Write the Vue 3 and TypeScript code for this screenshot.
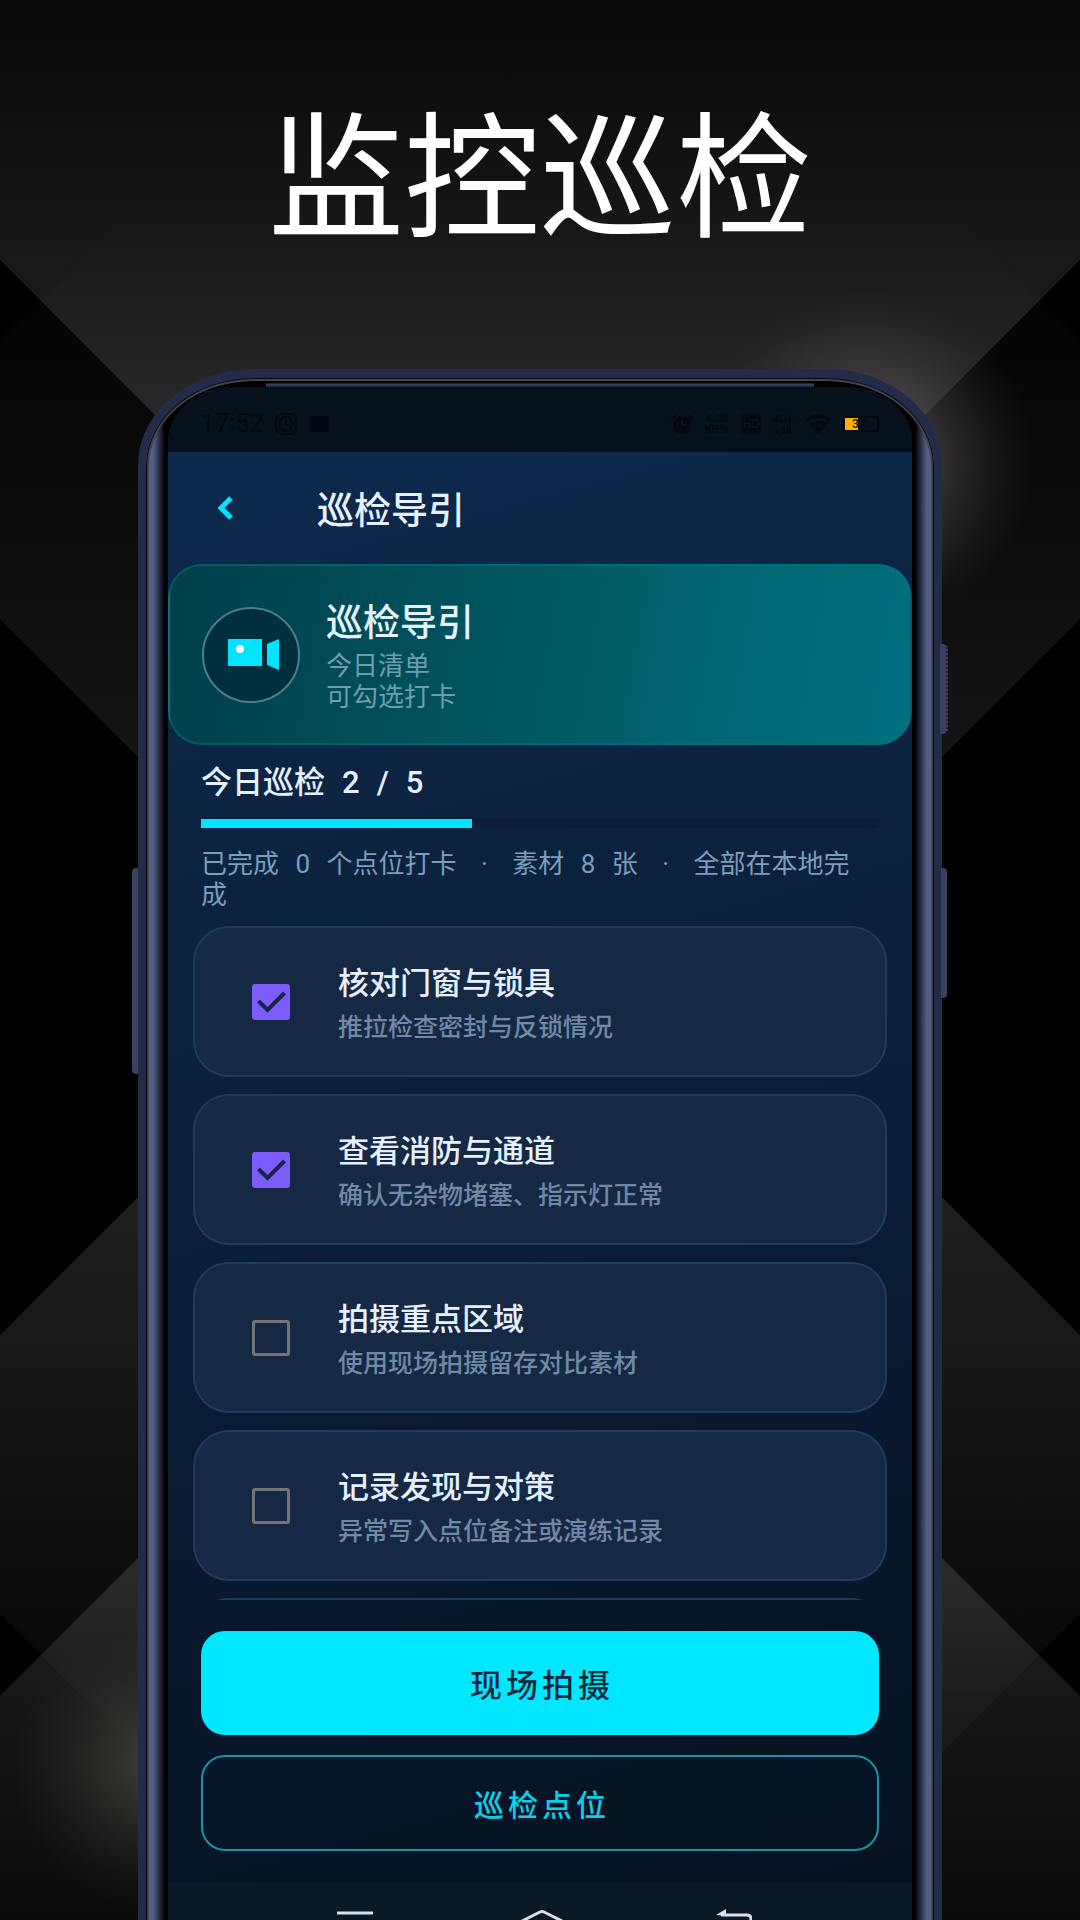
<script setup lang="ts">
import { computed, reactive } from 'vue'

interface Task {
  id: string
  title: string
  note: string
  done: boolean
}

const TOTAL = 5

const tasks = reactive<Task[]>([
  { id: 'locks', title: '核对门窗与锁具', note: '推拉检查密封与反锁情况', done: true },
  { id: 'fire', title: '查看消防与通道', note: '确认无杂物堵塞、指示灯正常', done: true },
  { id: 'photo', title: '拍摄重点区域', note: '使用现场拍摄留存对比素材', done: false },
  { id: 'record', title: '记录发现与对策', note: '异常写入点位备注或演练记录', done: false },
])

const doneCount = computed(() => tasks.filter((t) => t.done).length)
const percent = computed(() => (doneCount.value / TOTAL) * 100)
</script>

<template>
  <div class="page">
    <svg class="backdrop" viewBox="0 0 1080 1920" preserveAspectRatio="none" aria-hidden="true">
      <defs>
        <linearGradient id="g-top" gradientUnits="userSpaceOnUse" x1="0" y1="0" x2="0" y2="420">
          <stop offset="0" stop-color="#080808" />
          <stop offset="1" stop-color="#222" />
        </linearGradient>
        <linearGradient id="g-mid" gradientUnits="userSpaceOnUse" x1="0" y1="200" x2="0" y2="750">
          <stop offset="0" stop-color="#fff" stop-opacity="0" />
          <stop offset="1" stop-color="#fff" stop-opacity="0.08" />
        </linearGradient>
        <linearGradient id="g-low" gradientUnits="userSpaceOnUse" x1="0" y1="1200" x2="0" y2="1700">
          <stop offset="0" stop-color="#1f1f1f" />
          <stop offset="1" stop-color="#060606" />
        </linearGradient>
        <linearGradient id="g-foot" gradientUnits="userSpaceOnUse" x1="0" y1="1560" x2="0" y2="1920">
          <stop offset="0" stop-color="#fff" stop-opacity="0.12" />
          <stop offset="1" stop-color="#fff" stop-opacity="0.04" />
        </linearGradient>
        <radialGradient id="g-glow-r" gradientUnits="userSpaceOnUse" cx="865" cy="460" r="170">
          <stop offset="0" stop-color="#6b6268" stop-opacity="0.8" />
          <stop offset="0.45" stop-color="#5a5257" stop-opacity="0.5" />
          <stop offset="1" stop-color="#3a3538" stop-opacity="0" />
        </radialGradient>
        <radialGradient id="g-glow-l" gradientUnits="userSpaceOnUse" cx="155" cy="1765" r="145">
          <stop offset="0" stop-color="#4b4c42" stop-opacity="0.8" />
          <stop offset="1" stop-color="#2c2d28" stop-opacity="0" />
        </radialGradient>
      </defs>
      <rect width="1080" height="1920" fill="#000" />
      <polygon points="0,0 1080,0 1080,260 540,800 0,260" fill="url(#g-top)" />
      <polygon points="0,340 340,0 740,0 1080,340 1080,619 540,1159 0,619" fill="url(#g-mid)" />
      <polygon points="0,1335 540,795 1080,1335 1080,1614 540,2154 0,1614" fill="url(#g-low)" />
      <polygon points="0,1696 540,1156 1080,1696 1080,1920 0,1920" fill="url(#g-foot)" />
      <circle cx="865" cy="460" r="170" fill="url(#g-glow-r)" />
      <circle cx="155" cy="1765" r="145" fill="url(#g-glow-l)" />
    </svg>

    <h1 class="headline">监控巡检</h1>

    <div class="phone">
      <i class="key key-left"></i>
      <i class="key key-slider"></i>
      <i class="key key-right"></i>
      <div class="bezel">
        <main class="screen">
          <div class="status">
            <span class="clock">17:52</span>
            <svg width="22" height="22" viewBox="0 0 22 22">
              <rect x="1" y="1" width="20" height="20" rx="5" fill="none" stroke="currentColor" stroke-width="2" />
              <circle cx="11" cy="11" r="7" fill="none" stroke="currentColor" stroke-width="2" />
              <path d="M11 6v5l4 2" fill="none" stroke="currentColor" stroke-width="2" />
            </svg>
            <svg width="20" height="16" viewBox="0 0 20 16"><rect width="20" height="16" rx="2" fill="currentColor" /></svg>
            <span class="fill"></span>
            <svg width="22" height="20" viewBox="0 0 22 20">
              <circle cx="11" cy="11" r="9" fill="currentColor" />
              <path d="M1 5l4-4M21 5l-4-4" stroke="currentColor" stroke-width="2" />
              <path d="M11 6v5h4" fill="none" stroke="#07111b" stroke-width="2" />
            </svg>
            <span class="speed"><b>4.20</b><b>KB/s</b></span>
            <span class="hd">HD</span>
            <span class="cell">
              <b>4G+</b>
              <svg width="18" height="9" viewBox="0 0 18 9"><path d="M1 9V5h3v4zM7 9V3h4v6zM13 9V0h4v9z" fill="currentColor" /></svg>
            </span>
            <svg width="26" height="20" viewBox="0 0 26 20" fill="none" stroke="currentColor" stroke-width="3">
              <path d="M1 7q12-10 24 0M5 12q8-7 16 0M9 16q4-4 8 0" />
              <circle cx="13" cy="18" r="1" />
            </svg>
            <span class="battery"><i></i><b>37</b></span>
          </div>

          <header class="appbar">
            <button class="back" type="button" aria-label="返回">
              <svg width="16" height="24" viewBox="0 0 16 24"><path d="M14 2L4 12l10 10" fill="none" stroke="#00e5ff" stroke-width="5" /></svg>
            </button>
            <h2>巡检导引</h2>
          </header>

          <section class="hero">
            <svg class="hero-icon" width="100" height="98" viewBox="0 0 100 98" aria-hidden="true">
              <ellipse cx="50" cy="49" rx="48" ry="47" fill="#002f3d" stroke="#4d7f8b" stroke-width="2" />
              <path d="M27 33h34v27H27z" fill="#00e5ff" />
              <path d="M66 38l12-5v31l-12-5z" fill="#00e5ff" />
              <circle cx="39" cy="43" r="4" fill="#fff" />
            </svg>
            <div>
              <h3>巡检导引</h3>
              <p>今日清单</p>
              <p>可勾选打卡</p>
            </div>
          </section>

          <section class="progress">
            <p class="count"><span>今日巡检</span> <span>{{ doneCount }}</span> <span>/</span> <span>{{ TOTAL }}</span></p>
            <div class="track" role="progressbar" :aria-valuenow="doneCount" :aria-valuemax="TOTAL">
              <div class="bar" :style="{ width: percent + '%' }"></div>
            </div>
            <p class="summary">已完成 <span class="num">0</span> 个点位打卡 <span class="dot">·</span> 素材 <span class="num">8</span> 张 <span class="dot">·</span> 全部在本地完成</p>
          </section>

          <ul class="tasks">
            <li v-for="task in tasks" :key="task.id">
              <label class="card">
                <input v-model="task.done" type="checkbox" />
                <span class="copy">
                  <span class="title">{{ task.title }}</span>
                  <span class="note">{{ task.note }}</span>
                </span>
              </label>
            </li>
            <li class="card" aria-hidden="true"></li>
          </ul>

          <div class="actions">
            <button class="primary" type="button">现场拍摄</button>
            <button class="outline" type="button">巡检点位</button>
          </div>

          <nav class="sysnav" aria-hidden="true">
            <svg width="36" height="28" viewBox="0 0 36 28" fill="none" stroke="#d8dfea" stroke-width="3"><path d="M0 4h36M0 15h36M0 26h36" /></svg>
            <svg class="home" width="44" height="34" viewBox="0 0 44 34" fill="none" stroke="#d8dfea" stroke-width="3"><path d="M2 12L20 3q2-1 4 0l18 9v20H2z" /></svg>
            <svg width="36" height="28" viewBox="0 0 36 28" fill="none" stroke="#d8dfea" stroke-width="3"><path d="M5 6h26q4 0 4 4v12q0 4-4 4H4" /><path d="M0 6l10-6v7z" fill="#d8dfea" stroke="none" /></svg>
          </nav>
        </main>
      </div>
    </div>
  </div>
</template>

<style>
body {
  background: #000;
}
</style>

<style scoped>
.page,
.page * {
  box-sizing: border-box;
}

.page {
  position: relative;
  display: flex;
  flex-direction: column;
  height: 100vh;
  overflow: hidden;
  color: #e6f1ff;
  font-family: 'Noto Sans CJK SC', sans-serif;
}

h1,
h2,
h3,
p,
ul {
  margin: 0;
  padding: 0;
  font-weight: 500;
}

svg {
  display: block;
  flex: none;
}

.backdrop {
  position: absolute;
  inset: 0;
  width: 100%;
  height: 100%;
}

.headline {
  position: relative;
  padding: 68px 0 101px;
  color: #fff;
  font-size: 136px;
  font-weight: 400;
  line-height: 200px;
  text-align: center;
}

.phone {
  position: relative;
  display: flex;
  flex: 1;
  min-height: 0;
  width: calc(100% - 276px);
  margin: 0 auto;
  padding: 9px 8px 0;
  background: #222b48;
  border-radius: 116px 116px 0 0 / 96px 96px 0 0;
}

.key {
  position: absolute;
  width: 6px;
  background: #39415f;
}

.key-left {
  left: -6px;
  top: 499px;
  height: 206px;
  border-radius: 4px 0 0 4px;
}

.key-slider {
  right: -6px;
  top: 275px;
  width: 8px;
  height: 90px;
  border-right: 2px dotted #1c2236;
  border-radius: 0 5px 5px 0;
}

.key-right {
  right: -5px;
  top: 499px;
  height: 130px;
  border-radius: 0 4px 4px 0;
}

.bezel {
  display: flex;
  flex: 1;
  min-width: 0;
  margin-bottom: -4px;
  padding: 9px 22px 4px;
  border-radius: 108px 108px 0 0 / 88px 88px 0 0;
  box-shadow: inset 0 0 0 1px #08090f, inset 0 0 0 3px #444149;
  background:
    linear-gradient(180deg, #000 5px, #3d4766 6px, #1c2236 9px) center top / calc(100% - 240px) 9px no-repeat,
    linear-gradient(90deg, #56628a 4px, #4f5b80 8px, #05060a 18px, #000 20px, #000 calc(100% - 20px), #05060a calc(100% - 18px), #4f5b80 calc(100% - 8px), #56628a calc(100% - 4px));
}

.screen {
  display: flex;
  flex: 1;
  flex-direction: column;
  min-width: 0;
  overflow: hidden;
  border-radius: 64px 64px 0 0 / 56px 56px 0 0;
  background: linear-gradient(165deg, #0d2a50 0%, #0c2340 30%, #0a1c38 55%, #071628 80%, #06111f 100%);
}

.status {
  display: flex;
  flex: none;
  align-items: center;
  gap: 12px;
  height: 65px;
  padding: 9px 33px 0;
  background: #07111b;
  color: #03080f;
  font-family: Roboto, sans-serif;
}

.clock {
  font-size: 25px;
  line-height: 30px;
}

.fill {
  flex: 1;
}

.status b {
  font-weight: 500;
}

.speed,
.cell {
  display: flex;
  flex-direction: column;
  align-items: center;
  font-size: 11px;
  line-height: 11px;
}

.hd {
  padding: 0 2px;
  border-radius: 4px;
  background: #03080f;
  color: #0b1622;
  font-size: 12px;
  line-height: 20px;
}

.battery {
  display: flex;
  align-items: center;
  width: 36px;
  height: 16px;
  border: 2px solid #03080f;
  border-radius: 4px;
  font-size: 12px;
}

.battery i {
  width: 13px;
  height: 12px;
  background: #ffb300;
}

.battery b {
  margin-left: -6px;
}

.appbar {
  display: flex;
  flex: none;
  align-items: center;
  height: 112px;
  padding-left: 49px;
}

.back {
  display: flex;
  width: 100px;
  padding: 0;
  border: 0;
  background: none;
}

.appbar h2 {
  font-size: 37px;
  line-height: 44px;
}

.hero {
  display: flex;
  flex: none;
  align-items: center;
  gap: 25px;
  height: 181px;
  padding: 0 31px;
  border: 2px solid #00788880;
  border-radius: 34px;
  background: linear-gradient(100deg, #003f4a 0%, #005560 45%, #006672 75%, #006f7e 100%);
}

.hero h3 {
  margin-bottom: 8px;
  font-size: 37px;
  line-height: 46px;
}

.hero p,
.summary {
  color: #7d9dbb;
  font-family: Roboto, 'Noto Sans CJK SC', sans-serif;
  font-size: 26px;
  font-weight: 400;
  line-height: 31px;
}

.hero p {
  color: #6f9db0;
}

.progress {
  flex: none;
  padding: 18px 33px 0;
}

.count {
  display: flex;
  gap: 17px;
  font-family: Roboto, 'Noto Sans CJK SC', sans-serif;
  font-size: 31px;
  line-height: 40px;
}

.track {
  height: 9px;
  margin: 16px 0 21px;
  background: #0a1c36;
}

.bar {
  height: 100%;
  background: #00e5ff;
}

.summary {
  padding-right: 8px;
}

.num {
  margin: 0 10px;
}

.dot {
  margin: 0 18px;
}

.tasks {
  display: flex;
  flex: 1;
  flex-direction: column;
  gap: 17px;
  min-height: 0;
  margin-top: 15px;
  padding: 0 25px;
  overflow: hidden;
  list-style: none;
}

.card {
  display: flex;
  flex: none;
  align-items: center;
  height: 151px;
  border: 2px solid #213c58;
  border-radius: 36px;
  background: #162944;
}

.card input {
  flex: none;
  width: 38px;
  height: 36px;
  margin: 0 48px 0 57px;
  border: 3px solid #757575;
  border-radius: 3px;
  appearance: none;
}

.card input:checked {
  border: 0;
  background: #7c5cff url("data:image/svg+xml,%3Csvg xmlns='http://www.w3.org/2000/svg' viewBox='0 0 37 36'%3E%3Cpath d='M6 17l9 9L32 9' fill='none' stroke='%23182548' stroke-width='4'/%3E%3C/svg%3E") center / 100% 100%;
}

.copy {
  display: flex;
  flex-direction: column;
  gap: 6px;
}

.title {
  font-size: 31px;
  font-weight: 500;
  line-height: 40px;
}

.note {
  color: #7089a6;
  font-size: 25px;
  line-height: 36px;
}

.actions {
  display: flex;
  flex: none;
  flex-direction: column;
  gap: 20px;
  padding: 31px 33px 32px;
}

.actions button {
  padding: 0 0 0 4px;
  border: 0;
  border-radius: 24px;
  font-family: inherit;
  font-weight: 500;
  letter-spacing: 4px;
}

.actions .primary {
  height: 104px;
  background: #00e8ff;
  color: #06283a;
  font-size: 32px;
}

.actions .outline {
  height: 96px;
  border: 2px solid #1795ab;
  background: none;
  color: #0cd0e6;
  font-size: 30px;
}

.sysnav {
  display: flex;
  flex: none;
  align-items: flex-start;
  justify-content: space-between;
  height: 37px;
  padding: 26px 160px 0 169px;
  overflow: hidden;
  background: #0b1828;
}

.home {
  margin-right: 6px;
}
</style>
